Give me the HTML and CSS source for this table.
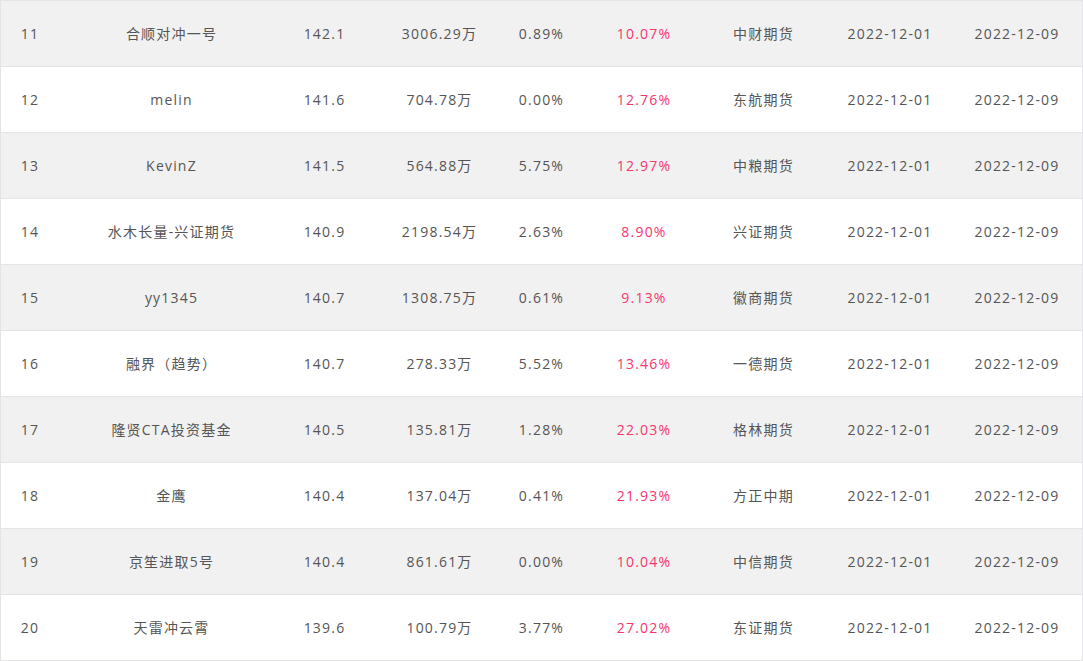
FILE: index.html
```html
<!DOCTYPE html>
<html lang="zh-CN">
<head>
<meta charset="utf-8">
<title>排行榜</title>
<link rel="stylesheet" href="styles.css">
</head>
<body>
<div class="table">
  <div class="row odd"><span>11</span><span>合顺对冲一号</span><span>142.1</span><span>3006.29万</span><span>0.89%</span><span class="pink">10.07%</span><span>中财期货</span><span>2022-12-01</span><span>2022-12-09</span></div>
  <div class="row"><span>12</span><span>melin</span><span>141.6</span><span>704.78万</span><span>0.00%</span><span class="pink">12.76%</span><span>东航期货</span><span>2022-12-01</span><span>2022-12-09</span></div>
  <div class="row odd"><span>13</span><span>KevinZ</span><span>141.5</span><span>564.88万</span><span>5.75%</span><span class="pink">12.97%</span><span>中粮期货</span><span>2022-12-01</span><span>2022-12-09</span></div>
  <div class="row"><span>14</span><span>水木长量-兴证期货</span><span>140.9</span><span>2198.54万</span><span>2.63%</span><span class="pink">8.90%</span><span>兴证期货</span><span>2022-12-01</span><span>2022-12-09</span></div>
  <div class="row odd"><span>15</span><span>yy1345</span><span>140.7</span><span>1308.75万</span><span>0.61%</span><span class="pink">9.13%</span><span>徽商期货</span><span>2022-12-01</span><span>2022-12-09</span></div>
  <div class="row"><span>16</span><span>融界（趋势）</span><span>140.7</span><span>278.33万</span><span>5.52%</span><span class="pink">13.46%</span><span>一德期货</span><span>2022-12-01</span><span>2022-12-09</span></div>
  <div class="row odd"><span>17</span><span>隆贤CTA投资基金</span><span>140.5</span><span>135.81万</span><span>1.28%</span><span class="pink">22.03%</span><span>格林期货</span><span>2022-12-01</span><span>2022-12-09</span></div>
  <div class="row"><span>18</span><span>金鹰</span><span>140.4</span><span>137.04万</span><span>0.41%</span><span class="pink">21.93%</span><span>方正中期</span><span>2022-12-01</span><span>2022-12-09</span></div>
  <div class="row odd"><span>19</span><span>京笙进取5号</span><span>140.4</span><span>861.61万</span><span>0.00%</span><span class="pink">10.04%</span><span>中信期货</span><span>2022-12-01</span><span>2022-12-09</span></div>
  <div class="row"><span>20</span><span>天雷冲云霄</span><span>139.6</span><span>100.79万</span><span>3.77%</span><span class="pink">27.02%</span><span>东证期货</span><span>2022-12-01</span><span>2022-12-09</span></div>
</div>
</body>
</html>
```

FILE: styles.css
```css
html, body {
  margin: 0;
  padding: 0;
  background: #ffffff;
}

.table {
  width: 1083px;
  box-sizing: border-box;
  border-left: 1px solid #e3e3e8;
  border-right: 1px solid #e3e3e8;
  border-bottom: 1px solid #e3e3e8;
  font-family: "Open Sans", "Noto Sans CJK SC", sans-serif;
  font-size: 14px;
  letter-spacing: 1.2px;
  color: #555555;
}

.row {
  display: grid;
  grid-template-columns: 57px 226px 80px 150px 54px 151px 88px 165px 89px 1fr;
  height: 66px;
  box-sizing: border-box;
  border-top: 1px solid #e3e3e8;
  align-items: center;
  background: #ffffff;
  line-height: 20px;
}

.row.odd {
  background: #f1f1f1;
}

.row span {
  text-align: center;
  white-space: nowrap;
  padding-left: 1px;
}

.row .pink {
  color: #f7356f;
}
```
